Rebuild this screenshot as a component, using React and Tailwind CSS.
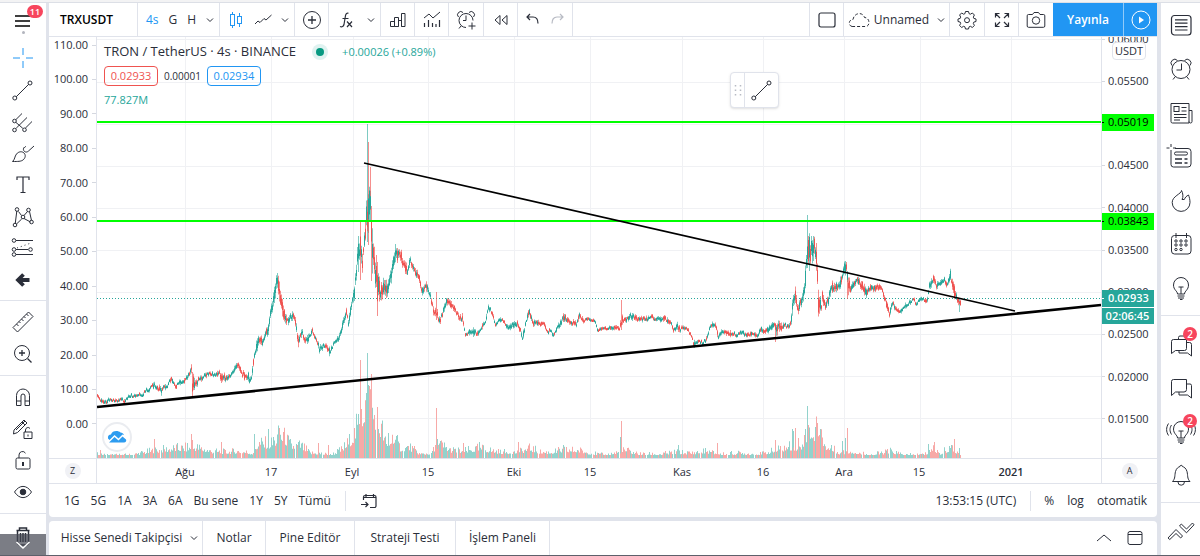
import clsx from "clsx";

// [x, high, low] outline of the price series
const PRICE = [
    [97, 395, 399], [100, 398, 405], [108, 398, 403], [118, 397, 401], [124, 398, 404], [131, 394, 399], [140, 392, 397],
    [147, 387, 393], [154, 380, 388], [157, 384, 391], [161, 386, 397], [167, 382, 388], [170, 376, 385], [176, 382, 388],
    [183, 378, 384], [189, 370, 378], [191, 364, 378], [192, 370, 397], [196, 378, 388], [204, 371, 378], [215, 371, 377],
    [219, 367, 376], [221, 372, 387], [230, 372, 378], [236, 360, 370], [240, 364, 374], [246, 374, 386], [251, 371, 382],
    [254, 351, 363], [258, 327, 346], [262, 338, 347], [266, 327, 338], [268, 322, 342], [270, 305, 318], [273, 289, 309],
    [277, 271, 294], [280, 281, 309], [283, 304, 330], [287, 314, 326], [291, 310, 321], [294, 311, 323], [298, 332, 349],
    [302, 329, 339], [305, 334, 346], [312, 327, 337], [316, 334, 343], [319, 344, 358], [325, 339, 348], [329, 345, 360],
    [333, 340, 347], [338, 333, 342], [342, 321, 334], [346, 307, 319], [348, 317, 329], [351, 295, 312], [354, 284, 302],
    [357, 242, 272], [360, 222, 282], [362, 252, 276], [365, 209, 246], [367, 176, 242], [369, 180, 245], [370, 167, 235],
    [371, 206, 281], [373, 230, 264], [377, 262, 315], [380, 282, 310], [383, 270, 296], [387, 282, 302], [390, 269, 288],
    [393, 247, 277], [396, 242, 263], [400, 248, 264], [403, 254, 270], [407, 263, 281], [410, 254, 267], [415, 265, 275],
    [418, 270, 284], [421, 284, 298], [426, 280, 291], [430, 291, 301], [434, 306, 320], [438, 311, 325], [442, 310, 321],
    [446, 294, 307], [450, 298, 308], [457, 310, 319], [462, 313, 326], [465, 331, 338], [475, 325, 337], [477, 331, 339],
    [482, 321, 329], [485, 318, 326], [488, 301, 312], [492, 310, 319], [495, 321, 327], [502, 316, 323], [507, 323, 331],
    [517, 319, 328], [520, 328, 336], [522, 334, 344], [525, 321, 329], [529, 305, 316], [533, 319, 326], [543, 320, 327],
    [548, 329, 335], [553, 330, 336], [558, 321, 329], [563, 313, 324], [570, 319, 326], [576, 321, 328], [579, 310, 320],
    [583, 315, 323], [595, 319, 324], [597, 327, 332], [617, 325, 330], [619, 327, 332], [621, 312, 331], [625, 314, 325],
    [630, 312, 321], [638, 316, 324], [652, 313, 321], [655, 317, 323], [663, 314, 322], [670, 317, 325], [673, 327, 333],
    [678, 320, 332], [680, 326, 332], [688, 326, 332], [692, 336, 343], [693, 340, 352], [697, 337, 343], [702, 340, 346],
    [706, 335, 342], [710, 324, 331], [715, 319, 328], [718, 331, 340], [723, 328, 334], [728, 330, 338], [737, 331, 337],
    [752, 330, 336], [758, 331, 337], [760, 327, 336], [767, 326, 334], [772, 321, 329], [774, 320, 328], [776, 324, 338],
    [778, 316, 331], [782, 323, 331], [787, 322, 329], [790, 317, 327], [792, 299, 320], [795, 285, 304], [798, 302, 317],
    [802, 289, 308], [804, 274, 298], [807, 225, 272], [809, 230, 278], [812, 231, 264], [814, 229, 257], [816, 242, 272],
    [818, 286, 318], [821, 299, 314], [822, 290, 306], [825, 299, 310], [828, 294, 306], [831, 281, 295], [837, 282, 294],
    [839, 279, 291], [842, 266, 284], [846, 256, 274], [848, 270, 296], [850, 284, 296], [853, 280, 290], [858, 274, 284],
    [862, 280, 292], [865, 287, 301], [870, 284, 292], [877, 283, 291], [882, 287, 293], [886, 299, 311], [889, 308, 318],
    [892, 301, 308], [896, 305, 311], [899, 308, 315], [905, 302, 309], [913, 296, 303], [915, 299, 305], [923, 296, 302],
    [927, 295, 303], [929, 281, 292], [933, 271, 287], [936, 281, 292], [940, 280, 288], [944, 276, 286], [947, 279, 288],
    [950, 268, 282], [952, 276, 290], [954, 282, 301], [957, 295, 303], [960, 297, 308],
];

// [x, top, bottom, side] single long wicks
const WICKS = [
    [192, 372, 397, "down"], [367, 124, 242, "up"], [368, 142, 245, "down"], [370, 167, 210, "down"], [621, 300, 330, "down"],
    [436, 292, 320, "down"], [775, 325, 342, "down"], [807, 215, 265, "up"], [360, 222, 280, "down"], [371, 206, 281, "down"],
    [377, 262, 316, "down"], [847, 272, 299, "down"], [959, 299, 312, "up"],
];

// [x, height] of the volume bars
const VOLUME = [
    [97, 4], [110, 3], [130, 3], [150, 7], [158, 8], [176, 10], [188, 10], [196, 11], [210, 7], [225, 6], [240, 7], [252, 5],
    [258, 15], [268, 14], [274, 16], [279, 24], [285, 20], [291, 12], [300, 13], [310, 5], [318, 5], [330, 3], [342, 9],
    [350, 18], [354, 24], [357, 32], [362, 46], [365, 56], [369, 66], [373, 46], [376, 42], [379, 32], [382, 28], [386, 12],
    [393, 22], [400, 10], [409, 11], [420, 4], [430, 5], [440, 14], [450, 8], [463, 7], [480, 10], [490, 8], [500, 6],
    [518, 6], [530, 10], [540, 6], [550, 6], [563, 8], [578, 8], [590, 5], [605, 3], [625, 8], [640, 4], [660, 4],
    [675, 6], [690, 5], [705, 7], [720, 4], [740, 5], [760, 4], [780, 9], [792, 12], [800, 10], [805, 22], [809, 30],
    [814, 24], [818, 33], [822, 20], [827, 10], [832, 9], [840, 5], [850, 7], [870, 3], [890, 7], [905, 3], [925, 4],
    [932, 10], [940, 5], [950, 10], [957, 6], [961, 3],
];

const VOLUME_SPIKES = [
    [100, 8, "down"], [154, 19, "down"], [187, 15, "up"], [191, 24, "down"], [192, 18, "down"], [221, 16, "down"], [254, 24, "up"],
    [268, 29, "up"], [273, 21, "up"], [278, 29, "up"], [279, 30, "down"], [283, 26, "down"], [318, 15, "down"], [328, 13, "down"],
    [349, 24, "up"], [360, 98, "down"], [361, 49, "down"], [366, 65, "up"], [367, 105, "up"], [369, 72, "down"], [371, 84, "down"],
    [377, 48, "down"], [381, 33, "up"], [388, 25, "up"], [436, 50, "down"], [437, 19, "up"], [463, 15, "down"], [479, 16, "up"],
    [518, 16, "down"], [563, 13, "up"], [620, 21, "up"], [621, 37, "down"], [678, 13, "up"], [717, 15, "down"], [775, 18, "down"],
    [792, 29, "up"], [793, 27, "up"], [795, 30, "down"], [798, 20, "down"], [804, 23, "down"], [807, 52, "up"], [808, 33, "down"],
    [817, 35, "down"], [831, 13, "up"], [842, 17, "up"], [845, 20, "up"], [847, 30, "down"], [928, 14, "up"], [934, 16, "down"],
    [949, 12, "up"], [954, 19, "down"], [959, 10, "up"],
];

const GRID_X = [185, 271, 353, 428, 514, 590, 682, 763, 844, 920, 1011];
const GRID_Y = [39, 82, 124, 166, 208, 250, 292, 334, 376, 418];
const LEFT_SCALE = ["110.00", "100.00", "90.00", "80.00", "70.00", "60.00", "50.00", "40.00", "30.00", "20.00", "10.00", "0.00"];
const RIGHT_SCALE = ["0.06000", "0.05500", "0.05000", "0.04500", "0.04000", "0.03500", "0.03000", "0.02500", "0.02000", "0.01500"];
const DATES = [
    [185, "Ağu"], [271, "17"], [352, "Eyl"], [428, "15"], [514, "Eki"], [590, "15"],
    [682, "Kas"], [763, "16"], [844, "Ara"], [919, "15"], [1011, "2021"],
];
const RANGES = ["1G", "5G", "1A", "3A", "6A", "Bu sene", "1Y", "5Y", "Tümü"];

function noise(n) {
    const s = Math.sin(n * 12.9898) * 43758.5453;
    return s - Math.floor(s);
}

function valueAt(points, x, column) {
    let i = 1;
    while (i < points.length - 1 && points[i][0] < x) i++;
    const a = points[i - 1];
    const b = points[i];
    const t = (x - a[0]) / (b[0] - a[0]);
    return a[column] + (b[column] - a[column]) * t;
}

function buildSeries() {
    const paths = { wickUp: "", wickDown: "", bodyUp: "", bodyDown: "", volUp: "", volDown: "" };
    const bar = (x, top, bottom) => `M${x} ${top.toFixed(1)}h1V${bottom.toFixed(1)}h-1z`;

    for (let x = 97; x <= 960; x++) {
        // shift runs of candles a little so that the outline stays ragged
        const shift = (noise(Math.floor(x / 3) + 70) - 0.5) * 3;
        const top = valueAt(PRICE, x, 1) + shift;
        const bottom = valueAt(PRICE, x, 2) + shift;
        const range = bottom - top;
        const slope = valueAt(PRICE, x + 1, 1) - valueAt(PRICE, x - 1, 1);
        const up = noise(x) + (slope < -0.5 ? 0.3 : slope > 0.5 ? -0.3 : 0) > 0.48;
        const high = top + noise(x + 5) * range * 0.4;
        const low = bottom - noise(x + 9) * range * 0.4;
        const bodyTop = high + (low - high) * (0.1 + noise(x + 13) * 0.3);
        const bodyLow = low - (low - high) * (0.1 + noise(x + 17) * 0.3);
        paths[up ? "wickUp" : "wickDown"] += bar(x, high, low);
        paths[up ? "bodyUp" : "bodyDown"] += bar(x, bodyTop, Math.max(bodyLow, bodyTop + 2));

        const height = valueAt(VOLUME, x, 1) * (0.65 + noise(x + 31) ** 2 * 0.9);
        if (x % 27 !== 25) {
            paths[noise(x + 41) + (up ? 0.2 : -0.2) > 0.5 ? "volUp" : "volDown"] += bar(x, 458 - Math.max(height, 3), 458);
        }
    }
    WICKS.forEach(([x, top, bottom, side]) => {
        paths[side === "up" ? "wickUp" : "wickDown"] += bar(x, top, bottom);
    });
    VOLUME_SPIKES.forEach(([x, height, side]) => {
        paths[side === "up" ? "volUp" : "volDown"] += bar(x, 458 - height, 458);
    });
    return paths;
}

const series = buildSeries();

function Icon({ children, size = 24, className }) {
    return (
        <svg
            width={size}
            height={size}
            viewBox={`0 0 ${size} ${size}`}
            fill="none"
            stroke="currentColor"
            className={clsx("shrink-0", className)}
            aria-hidden="true"
        >
            {children}
        </svg>
    );
}

const Chevron = () => (
    <Icon size={8}>
        <path d="M1 2.5l3 3 3-3" />
    </Icon>
);

const LineIcon = () => (
    <Icon>
        <path d="M5.2 18.8L17.8 6.2" />
        <circle cx="3.8" cy="20" r="2" />
        <circle cx="19" cy="5" r="2" />
    </Icon>
);

const drawTools = [
    ["İmleç", <Icon className="text-[#2196f3]"><path d="M12 2v7M12 15v7M2 12h7M15 12h7" /></Icon>],
    ["Trend çizgisi", <LineIcon />],
    ["Çatal", (
        <Icon>
            <path d="M4.8 10.7L11 4.5M5.2 19.2L16 8.500M14.300 19.200L21 12.500M4.800 13.300l7 6" />
            <circle cx="3.5" cy="12" r="1.8" />
            <circle cx="3.5" cy="21" r="1.8" />
            <circle cx="13.5" cy="20.800" r="1.8" />
        </Icon>
    )],
    ["Fırça", (
        <Icon>
            <path d="M1.5 20.500c2.500-2 2-5 4-7.500s5.500-3 7.500-1 1.500 5-1 7c-2 1.500-5 1.500-10.500 1.500z" />
            <path d="M13.500 6c-1.500 1.500-1.500 3 0 4.500 1.500 1 3 .5 4-.5L23 5M13.500 6.500c.5-.7 1-1 1.500-1" />
        </Icon>
    )],
    ["Yazı", <Icon><path d="M6 7V4h12v3M12 4v16M9.5 19.5h5" strokeWidth="1.2" /></Icon>],
    ["XABCD deseni", (
        <Icon>
            <path d="M4.2 19L5.8 6M7.500 6.500l3 4M13 10.500l3.500-4M18.500 6.500l2 9M5.500 19l5.200-5M13 13.500l6.500 3.500" />
            <circle cx="6" cy="4.5" r="1.8" />
            <circle cx="17.5" cy="5" r="1.8" />
            <circle cx="12" cy="12" r="1.8" />
            <circle cx="4" cy="20" r="1.8" />
            <circle cx="20.5" cy="17" r="1.8" />
        </Icon>
    )],
    ["Tahmin", (
        <Icon>
            <path d="M5 4.500h17M5 13.500h12M5 18.500h17" />
            <path d="M6 12L20 7" strokeDasharray="1 3" />
            <circle cx="3" cy="4.5" r="1.8" />
            <circle cx="3" cy="13.5" r="1.8" />
            <circle cx="19.5" cy="13.5" r="1.8" />
            <circle cx="3" cy="18.5" r="1.8" />
        </Icon>
    )],
    ["İkonlar", <Icon><path d="M18.500 12H8M12.500 6.500L7 12l5.500 5.500" strokeWidth="3.800" /></Icon>],
];

const measureTools = [
    ["Ölç", (
        <Icon>
            <path d="M2 17.500L17.500 2l4.500 4.500L6.500 22zM5.500 14l2 2M8 11.500l1.500 1.500M10.500 9l2 2M13 6.500L14.500 8M15.500 4l2 2" strokeLinejoin="round" />
        </Icon>
    )],
    ["Yakınlaş", (
        <Icon>
            <circle cx="11" cy="11" r="7.5" />
            <path d="M16.500 16.500l4 4M11 8v6M8 11h6" strokeWidth="1.3" />
        </Icon>
    )],
];

const lockTools = [
    ["Mıknatıs", (
        <Icon>
            <path d="M5.500 20.500v-10a6.500 6.500 0 0 1 13 0v10h-4.500V11a2 2 0 0 0-4 0v9.500zM5.500 16h4.500M14 16h4.500" />
        </Icon>
    )],
    ["Çizim modunda kal", (
        <Icon>
            <path d="M3 13L13 3l3 3L6.500 15.500 2.500 17zM5 13l9-9M11 5l3 3" />
            <path d="M13 15h8v6.500h-8zM14.500 15v-2a2.500 2.500 0 0 1 4.500-1.500M17 17.500v2" />
        </Icon>
    )],
    ["Kilitle", (
        <Icon>
            <rect x="5" y="10" width="14" height="11" rx="1.5" />
            <path d="M8 10V7a3.500 3.500 0 0 1 6.500-1.800" />
            <path d="M12 14v4" strokeWidth="2" />
        </Icon>
    )],
    ["Gizle", (
        <Icon>
            <path d="M3.500 12c5-7.500 12-7.500 17 0-5 7.500-12 7.500-17 0z" />
            <circle cx="12" cy="12" r="2.8" fill="currentColor" />
        </Icon>
    )],
];

const BulbShape = () => (
    <>
        <path d="M8.500 18c0-3-4-4-4-9a7.500 7.500 0 0 1 15 0c0 5-4 6-4 9z" />
        <path d="M8.500 20h7M9 22h6M11 23.500h2.500M9.500 11h5M12 11v7" />
    </>
);

const ChatShape = () => (
    <>
        <path d="M2.500 19.500v-14a2 2 0 0 1 2-2h13v10a2.500 2.500 0 0 1-2.500 2.500H6.500z" strokeLinejoin="round" />
        <path d="M17.500 8h3.500a1.500 1.500 0 0 1 1.500 1.500V22l-4-3H10V16" strokeLinejoin="round" />
    </>
);

const sideTools = [
    ["İzleme listesi", (
        <Icon>
            <rect x="2.500" y="2.500" width="19.5" height="19.5" rx="3" strokeWidth="1.2" />
            <path d="M6 6.800h12.500M6 10.200h12.500M6 13.600h12.500M6 17h12.500" strokeWidth="1.2" />
        </Icon>
    )],
    ["Alarmlar", (
        <Icon>
            <circle cx="12" cy="12.5" r="9" />
            <path d="M12.500 6.500V13H7.500M6 20l-2 2.500M18 20l2 2.500" />
            <path d="M8.500 3.500A3.700 3.700 0 0 0 3 8.500M15.500 3.500A3.700 3.700 0 0 1 21 8.500" />
        </Icon>
    )],
    ["Haberler", (
        <Icon>
            <path d="M2 2.500h18v19.500H3.500a1.500 1.500 0 0 1-1.500-1.500zM20 9.500h3v11a1.500 1.500 0 0 1-3 0" />
            <rect x="5" y="5.5" width="5" height="5" />
            <path d="M12.500 6.500h5M12.500 10h5M5 13.500h12.500M5 16.500h12.500M5 19h6" strokeWidth="1.2" />
        </Icon>
    )],
    ["Veri penceresi", (
        <Icon className="overflow-visible">
            <path d="M6 3.500h13a3 3 0 0 1 3 3V19a3 3 0 0 1-3 3H4.500a2.500 2.500 0 0 1-2.500-2.500V8" />
            <path d="M2-1v3M2 5v3M-2.500 3h3M4 3h3" />
            <rect x="5.5" y="7" width="13" height="3" rx="1.5" />
            <path d="M6 14h7M15.500 14h3M6 18h7M15.500 18h3" strokeWidth="1.3" />
        </Icon>
    )],
    ["Sıcak listeler", (
        <Icon>
            <path d="M12.500 2.500C12.500 6 3.200 8 3.200 14.500a8.900 8.900 0 0 0 17.800 0c0-3-.7-5.500-1.500-7.500-2 1-3.500 2.500-4.200 4.500H13c1.500-2 1-6.500-.5-9z" strokeLinejoin="round" />
        </Icon>
    )],
    ["Takvim", (
        <Icon>
            <rect x="2.5" y="3.5" width="19.5" height="18.5" rx="3" />
            <path d="M7 1v5M17.500 1v5" />
            {[9, 13, 17.5].map((y) =>
                [7, 12, 17].map((x) =>
                    x === 17 && y > 17 ? null : <circle key={`${x}-${y}`} cx={x} cy={y} r="1.2" />
                )
            )}
        </Icon>
    )],
    ["Fikirlerim", <Icon><BulbShape /></Icon>],
];

const socialTools = [
    ["Sohbetler", (
        <Icon>
            <path d="M9.500 6V4.500A1.500 1.500 0 0 1 11 3h6v4" />
            <path d="M2.500 20.500v-12a2 2 0 0 1 2-2H17.500v9a2 2 0 0 1-2 2H6.500z" strokeLinejoin="round" />
            <path d="M17.500 9.500h3a2 2 0 0 1 2 2V23l-4-3H10v-2.500" strokeLinejoin="round" />
        </Icon>
    ), "2"],
    ["Özel sohbetler", <Icon><ChatShape /></Icon>],
    ["Fikir akışı", (
        <Icon className="overflow-visible">
            <BulbShape />
            <path d="M2.500 5c-2 3-2 6 0 9.500M-.5 3.500c-2.500 4-2.500 8 0 12M21.500 5c2 3 2 6 0 9.500M24.500 3.500c2.500 4 2.500 8 0 12" />
        </Icon>
    ), "2"],
    ["Bildirimler", (
        <Icon>
            <path d="M3.500 18.500c3-3 2-6 3-10C7.500 5 9.500 4 11 3.500a1.200 1.200 0 0 1 2.400 0C15 4 17 5 18 8.500c1 4 0 7 3 10zM9 19a3.200 3.200 0 0 0 6.400 0" strokeLinejoin="round" />
        </Icon>
    )],
];

const ToolGroup = ({ tools, className }) => (
    <div className={clsx("flex shrink-0 flex-col", className)}>
        {tools.map(([label, icon, badge]) => (
            <button key={label} aria-label={label} className="relative flex min-h-0 flex-1 items-center justify-center">
                {icon}
                {badge && (
                    <span className="absolute top-1 left-[22px] flex size-[14px] items-center justify-center rounded-full bg-[#f7455d] text-[10px] font-semibold text-white">
                        {badge}
                    </span>
                )}
            </button>
        ))}
    </div>
);

const HeaderCell = ({ className, children, label }) => (
    <button
        aria-label={label}
        className={clsx("flex shrink-0 items-center justify-center border-r border-[#e0e3eb]", className)}
    >
        {children}
    </button>
);

const Header = () => (
    <header className="flex h-[34px] shrink-0 border-b border-[#e0e3eb] bg-white text-xs">
        <button className="w-[89px] shrink-0 border-r border-[#e0e3eb] pl-[11px] text-left font-semibold text-black">
            TRXUSDT
        </button>
        <div className="flex w-[82px] shrink-0 items-center justify-between border-r border-[#e0e3eb] pr-[5px] pl-2">
            <button className="text-[#2196f3]">4s</button>
            <button>G</button>
            <button>H</button>
            <button aria-label="Zaman aralığı"><Chevron /></button>
        </div>
        <div className="flex w-[75px] shrink-0 items-center justify-between border-r border-[#e0e3eb] pr-[5px] pl-2">
            <button aria-label="Mumlar">
                <Icon size={16} className="text-[#2196f3]">
                    <path d="M4.500 0v3M4.500 13v3M11.500 1v3M11.500 12v3" />
                    <rect x="2.5" y="2.5" width="4" height="11" />
                    <rect x="9.5" y="4.5" width="4" height="7" />
                </Icon>
            </button>
            <button aria-label="Çizgi">
                <Icon size={18}>
                    <path d="M1 13l3-3 2 1.500 4-4 2 1.500L17.500 4" />
                </Icon>
            </button>
            <button aria-label="Grafik türü"><Chevron /></button>
        </div>
        <HeaderCell className="w-[34px]" label="Karşılaştır">
            <Icon size={20}><circle cx="10" cy="10" r="8.5" /><path d="M10 6v8M6 10h8" strokeWidth="1.3" /></Icon>
        </HeaderCell>
        <div className="flex w-[52px] shrink-0 items-center justify-between border-r border-[#e0e3eb] pr-[5px] pl-[10px]">
            <button aria-label="Göstergeler">
                <Icon size={18}>
                    <path d="M1 15.500c2 .8 3.500 0 4-2L6.500 4.500c.4-2 1.500-2.700 3-2.200M3.500 7.500h6M8 10.500l5 5.500M13 10.500l-5 5.500" strokeWidth="1.2" />
                </Icon>
            </button>
            <button aria-label="Gösterge şablonları"><Chevron /></button>
        </div>
        <HeaderCell className="w-[34px]" label="Finansallar">
            <Icon size={18}>
                <path d="M1.500 15.500v-5h4v5zM5.500 15.500v-9h4v9zM9.500 15.500v-6h3v6M12.500 15.500V2.500h3.500v13z" />
            </Icon>
        </HeaderCell>
        <HeaderCell className="w-[34px]" label="Şablonlar">
            <Icon size={18}>
                <path d="M1 7l5-4 4 4 7-6" />
                <path d="M1.500 12v4M5.500 9v7M9.500 12v4M13 13v3M16.500 9v7" strokeWidth="1.2" />
            </Icon>
        </HeaderCell>
        <HeaderCell className="w-[35px]" label="Alarm">
            <Icon size={20}>
                <path d="M10 17.500a7 7 0 1 1 7-7M10 5.500v5H7M16 12.500v7M12.500 16h7" />
                <path d="M7 2.500A3 3 0 0 0 2.500 7M13 2.500A3 3 0 0 1 17.500 7M5 16l-2 2.500" />
            </Icon>
        </HeaderCell>
        <HeaderCell className="w-[34px]" label="Tekrar oynat">
            <Icon size={16}>
                <path d="M7 3.500v9L2 8zM14 3.500v9L9 8z" />
            </Icon>
        </HeaderCell>
        <div className="flex w-[55px] shrink-0 items-center justify-center gap-3 border-r border-[#e0e3eb]">
            <button aria-label="Geri al">
                <Icon size={13}><path d="M4 1L1 4l3 3M1 4h6c3 0 5 2.500 5 6.500" strokeWidth="1.2" /></Icon>
            </button>
            <button aria-label="Yinele" className="text-[#b8bbc4]">
                <Icon size={13}><path d="M9 1l3 3-3 3M12 4H6c-3 0-5 2.500-5 6.500" strokeWidth="1.2" /></Icon>
            </button>
        </div>
        <div className="flex-1" />
        <HeaderCell className="w-[35px] border-l" label="Yerleşim">
            <Icon size={18}><rect x="1" y="2" width="16" height="14" rx="2" strokeWidth="1.2" /></Icon>
        </HeaderCell>
        <HeaderCell className="w-[106px] gap-1">
            <Icon size={22}>
                <path d="M4 17.500c-4-1-3.500-7 1-7C6.500 3 15 3 16.500 8.500c5 0 6 7.500 2 9z" strokeDasharray="3 2" />
            </Icon>
            <span>Unnamed</span>
            <span className="ml-1"><Chevron /></span>
        </HeaderCell>
        <HeaderCell className="w-[35px]" label="Ayarlar">
            <Icon size={20}>
                <path d="M8.500 1.500h3l.6 2.200 1.300.5 2-1.200 2 2-1.100 2.100.5 1.300 2.200.6v2.500l-2.200.6-.5 1.300 1.100 2-2 2.100-2-1.200-1.300.5-.6 2.200h-3l-.6-2.200-1.300-.5-2 1.200-2-2.100 1.100-2-.5-1.300-2.200-.6V9l2.200-.6.5-1.300L2.600 5l2-2 2 1.200 1.300-.5z" strokeLinejoin="round" />
                <circle cx="10" cy="10.2" r="2.5" />
            </Icon>
        </HeaderCell>
        <HeaderCell className="w-[34px]" label="Tam ekran">
            <Icon size={16}>
                <path d="M1.500 5.500v-4h4M1.500 1.500L6 6M10.500 1.500h4v4M14.500 1.500L10 6M1.500 10.500v4h4M1.500 14.500L6 10M10.500 14.500h4v-4M14.500 14.500L10 10" strokeWidth="1.2" />
            </Icon>
        </HeaderCell>
        <button aria-label="Görüntü al" className="flex w-[34px] shrink-0 items-center justify-center">
            <Icon size={20}>
                <path d="M2.500 4.500h4L8 2.500h4.500L14 4.500h3.500a1.300 1.300 0 0 1 1.300 1.300V16a1.300 1.300 0 0 1-1.300 1.300h-15A1.300 1.300 0 0 1 1.200 16V5.800a1.300 1.300 0 0 1 1.300-1.300z" />
                <circle cx="10" cy="10.5" r="3.7" />
            </Icon>
        </button>
        <button className="w-[70px] shrink-0 bg-[#2196f3] font-semibold text-white">Yayınla</button>
        <button aria-label="Oynat" className="flex w-[34px] shrink-0 items-center justify-center border-l border-[#90caf9] bg-[#2196f3] text-white">
            <Icon size={20}>
                <circle cx="10" cy="10" r="9" />
                <path d="M8 6.500v7l5-3.500z" fill="currentColor" stroke="none" />
            </Icon>
        </button>
    </header>
);

const Plot = () => (
    <svg viewBox="97 37 1004 421" preserveAspectRatio="none" className="block size-full" role="img" aria-label="TRXUSDT">
        <g stroke="#f0f1f4">
            {GRID_X.map((x) => <path key={x} d={`M${x + 0.5} 37V458`} />)}
            {GRID_Y.map((y) => <path key={y} d={`M97 ${y + 0.5}H1101`} />)}
        </g>
        <path d={series.volUp} fill="#92d2cc" />
        <path d={series.volDown} fill="#f7a9a7" />
        <path d="M97 298.500H1101" stroke="#26a69a" strokeDasharray="1 2" />
        <path d={series.wickUp} fill="#26a69a" fillOpacity=".6" />
        <path d={series.wickDown} fill="#ef5350" fillOpacity=".65" />
        <path d={series.bodyUp} fill="#26a69a" />
        <path d={series.bodyDown} fill="#ef5350" />
        <path d="M97 122H1101M97 221H1101" stroke="#00ff00" strokeWidth="2" />
        <path d="M97 407L1101 305" stroke="#000" strokeWidth="2.6" />
        <path d="M364 163L1015 311" stroke="#000" strokeWidth="1.7" />
    </svg>
);

const PriceTag = ({ className, children }) => (
    <div className={clsx("absolute -left-px flex h-[17px] w-[53px] items-center gap-1", className)}>
        <span className="h-px w-[3px] bg-current" />
        {children}
    </div>
);

const Chart = () => (
    <section className="flex min-h-0 flex-1 bg-white text-[11px]">
        <div className="flex w-12 shrink-0 flex-col justify-between border-r border-[#e0e3eb] pt-px pb-[27px]">
            {LEFT_SCALE.map((value) => (
                <div key={value} className="flex h-[14px] items-center justify-end gap-1">
                    {value}
                    <span className="h-px w-1 bg-[#d5d8e0]" />
                </div>
            ))}
        </div>
        <div className="relative min-w-0 flex-1">
            <Plot />
            <div className="absolute top-[5px] left-[7px] flex flex-col gap-1">
                <div className="flex h-5 items-center">
                    <h1 className="text-[13px]">TRON / TetherUS · 4s · BINANCE</h1>
                    <span className="ml-4 flex size-4 items-center justify-center rounded-full bg-[#dff2f0]">
                        <span className="size-2 rounded-full bg-[#089981]" />
                    </span>
                    <span className="ml-[14px] text-[11px] text-[#26a69a]">+0.00026 (+0.89%)</span>
                </div>
                <div className="flex items-center gap-[6px]">
                    <button className="h-5 w-[54px] rounded border border-[#ef5350] text-[#ef5350]">0.02933</button>
                    <span className="text-[10px]">0.00001</span>
                    <button className="h-5 w-[54px] rounded border border-[#2196f3] text-[#2196f3]">0.02934</button>
                </div>
                <div className="h-5 leading-5 text-[#26a69a]">77.827M</div>
            </div>
            <div className="absolute top-[35px] left-[633px] flex h-[36px] w-[49px] rounded border border-[#e0e3eb] bg-white shadow">
                <span className="flex w-[14px] items-center justify-center border-r border-[#e0e3eb] text-[#b8bbc4]">
                    <Icon size={12}>
                        <path d="M3.500 1v12M8.500 1v12" strokeWidth="1.5" strokeDasharray="1.5 3" />
                    </Icon>
                </span>
                <button aria-label="Trend çizgisi" className="flex flex-1 items-center justify-center"><LineIcon /></button>
            </div>
            <div className="absolute bottom-[6px] left-[5px] flex size-[30px] items-center justify-center rounded-full border-2 border-[#eaecf0] bg-white text-[#2d9cf0]">
                <Icon size={20}>
                    <path d="M1 11.500c-.5-2.500 1-4 3-4C5 3.500 11 3 13.500 5.500c1.500 0 3 1 3.500 2.500l-1.500-.5-4 4-4-3.500-5 5z" fill="currentColor" stroke="none" />
                    <path d="M2 15.500L7.500 10l4 3.500L15.500 9.500l3.500 3c.8 1.500-.3 3-2 3z" fill="currentColor" stroke="none" />
                </Icon>
            </div>
        </div>
        <div className="relative flex w-14 shrink-0 flex-col overflow-hidden border-l border-[#e0e3eb]">
            <div className="-mt-[5px] flex flex-1 flex-col justify-between pb-[32px]">
                {RIGHT_SCALE.map((value) => (
                    <div key={value} className="flex h-[14px] items-center gap-[3px]">
                        <span className="h-px w-[3px] bg-[#d5d8e0]" />
                        {value}
                    </div>
                ))}
            </div>
            <button className="absolute top-[5px] left-[10px] h-[18px] w-[34px] rounded border border-[#e0e3eb] bg-white">USDT</button>
            <PriceTag className="top-[77px] bg-[#00ff00] text-black">0.05019</PriceTag>
            <PriceTag className="top-[176px] bg-[#00ff00] text-black">0.03843</PriceTag>
            <PriceTag className="top-[253px] bg-[#26a69a] font-semibold text-white">0.02933</PriceTag>
            <div className="absolute top-[271px] -left-px h-4 w-[53px] bg-[#26a69a] text-center leading-4 font-semibold text-white">
                02:06:45
            </div>
        </div>
    </section>
);

const TimeAxis = () => (
    <div className="flex h-[25px] shrink-0 border-t border-[#e0e3eb] bg-white text-[11px]">
        <div className="flex w-12 shrink-0 items-center justify-center border-r border-[#e0e3eb]">
            <button className="size-4 rounded-full bg-[#f0f1f5] text-[9px]">Z</button>
        </div>
        <svg className="h-full min-w-0 flex-1" fill="currentColor">
            {DATES.map(([x, label]) => (
                <text
                    key={x}
                    x={`${((x - 97) / 1004) * 100}%`}
                    y="17"
                    textAnchor="middle"
                    className={clsx(label === "2021" && "font-semibold")}
                >
                    {label}
                </text>
            ))}
        </svg>
        <div className="flex w-14 shrink-0 items-center justify-center border-l border-[#e0e3eb]">
            <button className="size-4 rounded-full bg-[#f0f1f5] text-[9px]">A</button>
        </div>
    </div>
);

const RangeBar = () => (
    <div className="flex h-[34px] shrink-0 items-center rounded-b border-t border-[#e0e3eb] bg-white pr-[10px] pl-[15px] text-xs">
        <div className="flex gap-[11px]">
            {RANGES.map((range) => <button key={range}>{range}</button>)}
        </div>
        <span className="mx-[14px] h-5 w-px bg-[#e0e3eb]" />
        <button aria-label="Tarihe git">
            <Icon size={18}>
                <path d="M3.500 8V5a1.500 1.500 0 0 1 1.500-1.500h9.500A1.500 1.500 0 0 1 16 5v9a1.500 1.500 0 0 1-1.500 1.500H10M6 2v3M13.500 2v3M4 5.500h11.500M1 12.500h7M5.500 10L8 12.500 5.500 15" strokeWidth="1.2" />
            </Icon>
        </button>
        <button className="ml-auto">13:53:15 (UTC)</button>
        <span className="mr-[13px] ml-[14px] h-5 w-px bg-[#e0e3eb]" />
        <div className="flex gap-[13px]">
            <button>%</button>
            <button>log</button>
            <button>otomatik</button>
        </div>
    </div>
);

const Tab = ({ className, children }) => (
    <button className={clsx("flex shrink-0 items-center justify-center border-r border-[#e0e3eb]", className)}>{children}</button>
);

const BottomTabs = () => (
    <nav className="mt-1 flex h-[34px] shrink-0 items-center rounded-t bg-white text-xs">
        <div className="flex h-full flex-1">
            <Tab className="w-[154px] gap-2 pl-2">Hisse Senedi Takipçisi <Chevron /></Tab>
            <Tab className="w-[63px]">Notlar</Tab>
            <Tab className="w-[89px]">Pine Editör</Tab>
            <Tab className="w-[101px]">Strateji Testi</Tab>
            <Tab className="w-[94px]">İşlem Paneli</Tab>
        </div>
        <div className="flex items-center gap-[15px] pr-[14px]">
            <button aria-label="Paneli aç"><Icon size={16}><path d="M1 11l7-6 7 6" /></Icon></button>
            <button aria-label="Paneli büyüt">
                <Icon size={16}><rect x="1" y="1.5" width="14" height="13" rx="2" /><path d="M1 4.500h14" /></Icon>
            </button>
        </div>
    </nav>
);

export default function App() {
    return (
        <div className="flex h-screen flex-col overflow-hidden border-b border-[#5d606b] bg-[#e0e3eb] font-['Open_Sans','Noto_Sans',sans-serif] text-[#2a2e39]">
            <div className="h-[3px] shrink-0 border-b border-[#dcdfe6] bg-[#f3f3f4]" />
            <div className="flex min-h-0 flex-1">
                <aside className="flex w-[46px] shrink-0 flex-col bg-white">
                    <div className="flex h-[39px] shrink-0 justify-center">
                        <button aria-label="Menü" className="relative h-[33px] w-6 text-black">
                            <Icon>
                                <path d="M4 11h15M4 16h15M4 21h15" strokeWidth="1.6" />
                            </Icon>
                            <span className="absolute top-[2px] left-4 flex h-[13px] w-4 items-center justify-center rounded-full bg-[#f7455d] text-[9px] font-semibold text-white">
                                11
                            </span>
                            <span className="mx-auto mt-[2px] block size-[3px] rounded-full bg-[#b2b5be]" />
                        </button>
                    </div>
                    <ToolGroup tools={drawTools} className="h-[254px]" />
                    <ToolGroup tools={measureTools} className="mt-1 h-[75px] border-t border-[#e0e3eb] py-[5px]" />
                    <ToolGroup tools={lockTools} className="h-[138px] border-t border-[#e0e3eb] py-[5px]" />
                    <div className="relative flex flex-1 flex-col border-t border-[#e0e3eb]">
                        <button aria-label="Sil" className="flex flex-1 items-center justify-center pt-1">
                            <Icon>
                                <path d="M6.500 6v11a3 3 0 0 0 3 3h5a3 3 0 0 0 3-3V6M5.500 5.500h13M8.500 5V3h7v2M9.500 8v9M12 8v9M14.500 8v9" strokeWidth="1.5" />
                            </Icon>
                        </button>
                        <button aria-label="Aşağı kaydır" className="absolute inset-x-0 bottom-0 flex h-[21px] items-end justify-center bg-[#434651]/70 pb-1 text-white">
                            <Icon size={16}><path d="M1.500 7L8 13l6.500-6" strokeWidth="1.5" /></Icon>
                        </button>
                    </div>
                </aside>
                <main className="mr-1 ml-[3px] flex min-w-0 flex-1 flex-col">
                    <Header />
                    <Chart />
                    <TimeAxis />
                    <RangeBar />
                    <BottomTabs />
                </main>
                <aside className="flex w-[39px] shrink-0 flex-col bg-white">
                    <ToolGroup tools={sideTools} className="h-[307px]" />
                    <ToolGroup tools={socialTools} className="mt-[5px] h-[187px] border-t border-[#e0e3eb] pt-[7px] pb-[5px]" />
                    <button aria-label="Daralt" className="flex flex-1 items-center justify-center border-t border-[#e0e3eb] pt-2">
                        <Icon size={28}>
                            <path d="M1 19l8-8.500 6.500 6.500-1.800 2L9 14.500 2.800 20.500zM12.500 7l1.800-2 5.200 5 6-6L27 5.800l-7.500 8z" strokeLinejoin="round" />
                        </Icon>
                    </button>
                </aside>
            </div>
        </div>
    );
}
